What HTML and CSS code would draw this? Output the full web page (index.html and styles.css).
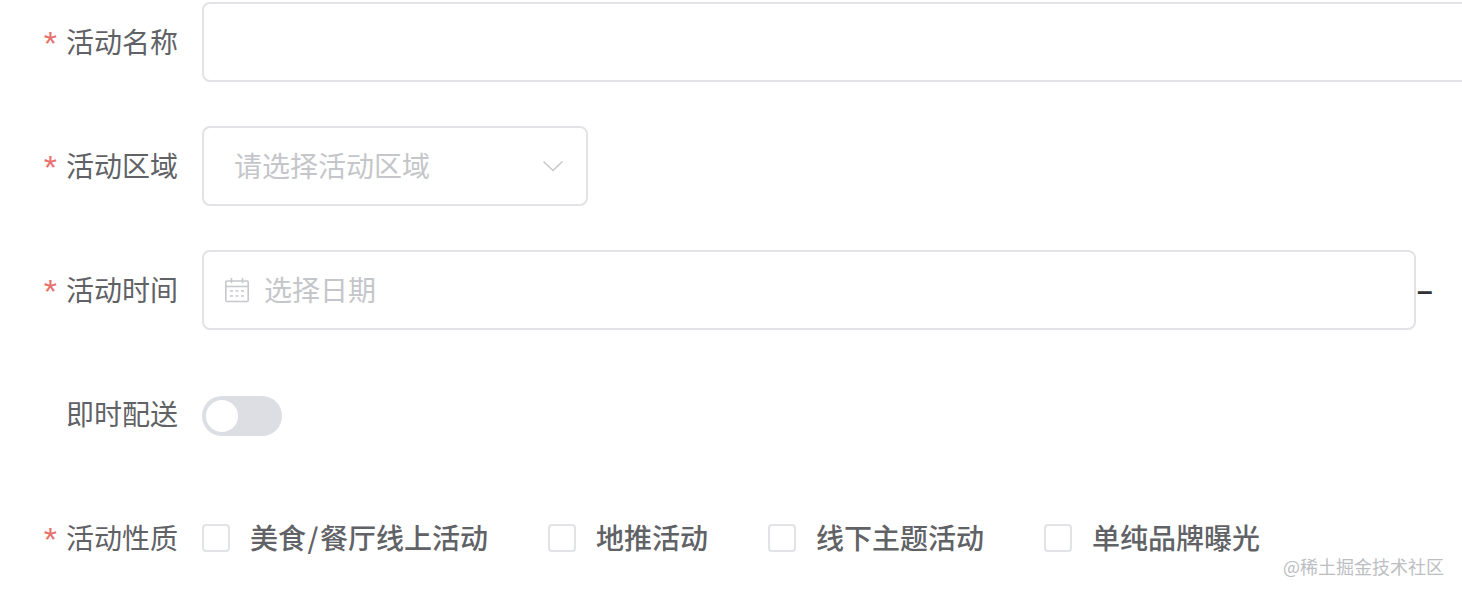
FILE: index.html
```html
<!DOCTYPE html>
<html lang="zh-CN">
<head>
    <meta charset="UTF-8">
    <meta name="viewport" content="width=device-width, initial-scale=1.0">
    <title>活动表单</title>
    <link rel="stylesheet" href="styles.css">
</head>
<body>
    <form class="form">
        <div class="form-item">
            <label class="form-label required">活动名称</label>
            <div class="form-content">
                <div class="input input-name"></div>
            </div>
        </div>
        <div class="form-item">
            <label class="form-label required">活动区域</label>
            <div class="form-content">
                <div class="input input-select">
                    <span class="placeholder">请选择活动区域</span>
                    <svg class="arrow" width="22" height="12" viewBox="0 0 22 12" fill="none" stroke="#c6c8cc" stroke-width="1.6">
                        <path d="M1.5 1.5 L11 10.5 L20.5 1.5"/>
                    </svg>
                </div>
            </div>
        </div>
        <div class="form-item">
            <label class="form-label required">活动时间</label>
            <div class="form-content">
                <div class="input input-date">
                    <svg class="calendar" width="26" height="26" viewBox="0 0 26 26" fill="none" stroke="#c6c8cc" stroke-width="1.6">
                        <rect x="1.8" y="4" width="22.4" height="20.5" rx="1"/>
                        <path d="M1.8 9.5 H24.2 M7.5 1 V6 M18.5 1 V6"/>
                        <path d="M6 14 H9 M11.5 14 H14.5 M17 14 H20 M6 19 H9 M11.5 19 H14.5 M17 19 H20" stroke-width="1.4"/>
                    </svg>
                    <span class="placeholder">选择日期</span>
                </div>
                <span class="range-sep">–</span>
            </div>
        </div>
        <div class="form-item">
            <label class="form-label">即时配送</label>
            <div class="form-content">
                <span class="switch"><span class="switch-knob"></span></span>
            </div>
        </div>
        <div class="form-item">
            <label class="form-label required">活动性质</label>
            <div class="form-content checkbox-group">
                <label class="checkbox"><span class="checkbox-box"></span><span class="checkbox-text">美食<span class="slash">/</span>餐厅线上活动</span></label>
                <label class="checkbox"><span class="checkbox-box"></span><span class="checkbox-text">地推活动</span></label>
                <label class="checkbox"><span class="checkbox-box"></span><span class="checkbox-text">线下主题活动</span></label>
                <label class="checkbox"><span class="checkbox-box"></span><span class="checkbox-text">单纯品牌曝光</span></label>
            </div>
        </div>
    </form>
    <div class="watermark">@稀土掘金技术社区</div>
</body>
</html>
```

FILE: styles.css
```css
html, body {
    height: 596px;
    overflow: hidden;
}
body {
    margin: 0;
    background-color: #fff;
    color: #606266;
    font-family: "Noto Sans CJK SC", "Liberation Sans", sans-serif;
    font-size: 28px;
}
.form {
    display: flex;
    flex-direction: column;
    gap: 44px;
    padding-top: 2px;
    overflow: hidden;
}
.form-item {
    display: flex;
    align-items: center;
    height: 80px;
}
.form-label {
    flex: none;
    width: 178px;
    margin-right: 24px;
    padding-bottom: 2px;
    text-align: right;
}
.required::before {
    content: "*";
    margin-right: 9px;
    color: #e8706d;
    font-family: "Liberation Sans", sans-serif;
    font-size: 34px;
    line-height: 0;
    vertical-align: -2px;
}
.form-content {
    display: flex;
    align-items: center;
}
.input {
    display: flex;
    align-items: center;
    flex: none;
    box-sizing: border-box;
    height: 80px;
    border: 2px solid #e2e3e6;
    border-radius: 8px;
    background-color: #fff;
}
.input-name {
    width: 1400px;
}
.input-select {
    justify-content: space-between;
    width: 386px;
    padding: 0 22px 0 30px;
}
.input-date {
    gap: 14px;
    width: 1214px;
    padding-left: 20px;
}
.placeholder {
    padding-bottom: 2px;
    color: #c4c6ca;
}
.calendar {
    flex: none;
}
.range-sep {
    margin-left: 1px;
    padding-top: 2px;
    color: #303133;
    font-family: "Liberation Sans", sans-serif;
    font-size: 28px;
    font-weight: 700;
}
.switch {
    position: relative;
    display: block;
    width: 80px;
    height: 40px;
    margin-top: 4px;
    border-radius: 20px;
    background-color: #dddee4;
}
.switch-knob {
    position: absolute;
    top: 4px;
    left: 4px;
    width: 32px;
    height: 32px;
    border-radius: 50%;
    background-color: #fff;
}
.checkbox-group {
    gap: 60px;
}
.checkbox {
    display: flex;
    align-items: center;
    gap: 20px;
    font-weight: 500;
}
.checkbox-text {
    padding-bottom: 2px;
}
.slash {
    margin: 0 1.5px;
}
.checkbox-box {
    flex: none;
    box-sizing: border-box;
    width: 28px;
    height: 28px;
    border: 2px solid #e2e3e6;
    border-radius: 4px;
    background-color: #fff;
}
.watermark {
    position: absolute;
    top: 554px;
    right: 18px;
    color: #bcbec2;
    font-size: 18px;
    line-height: 24px;
}
```
